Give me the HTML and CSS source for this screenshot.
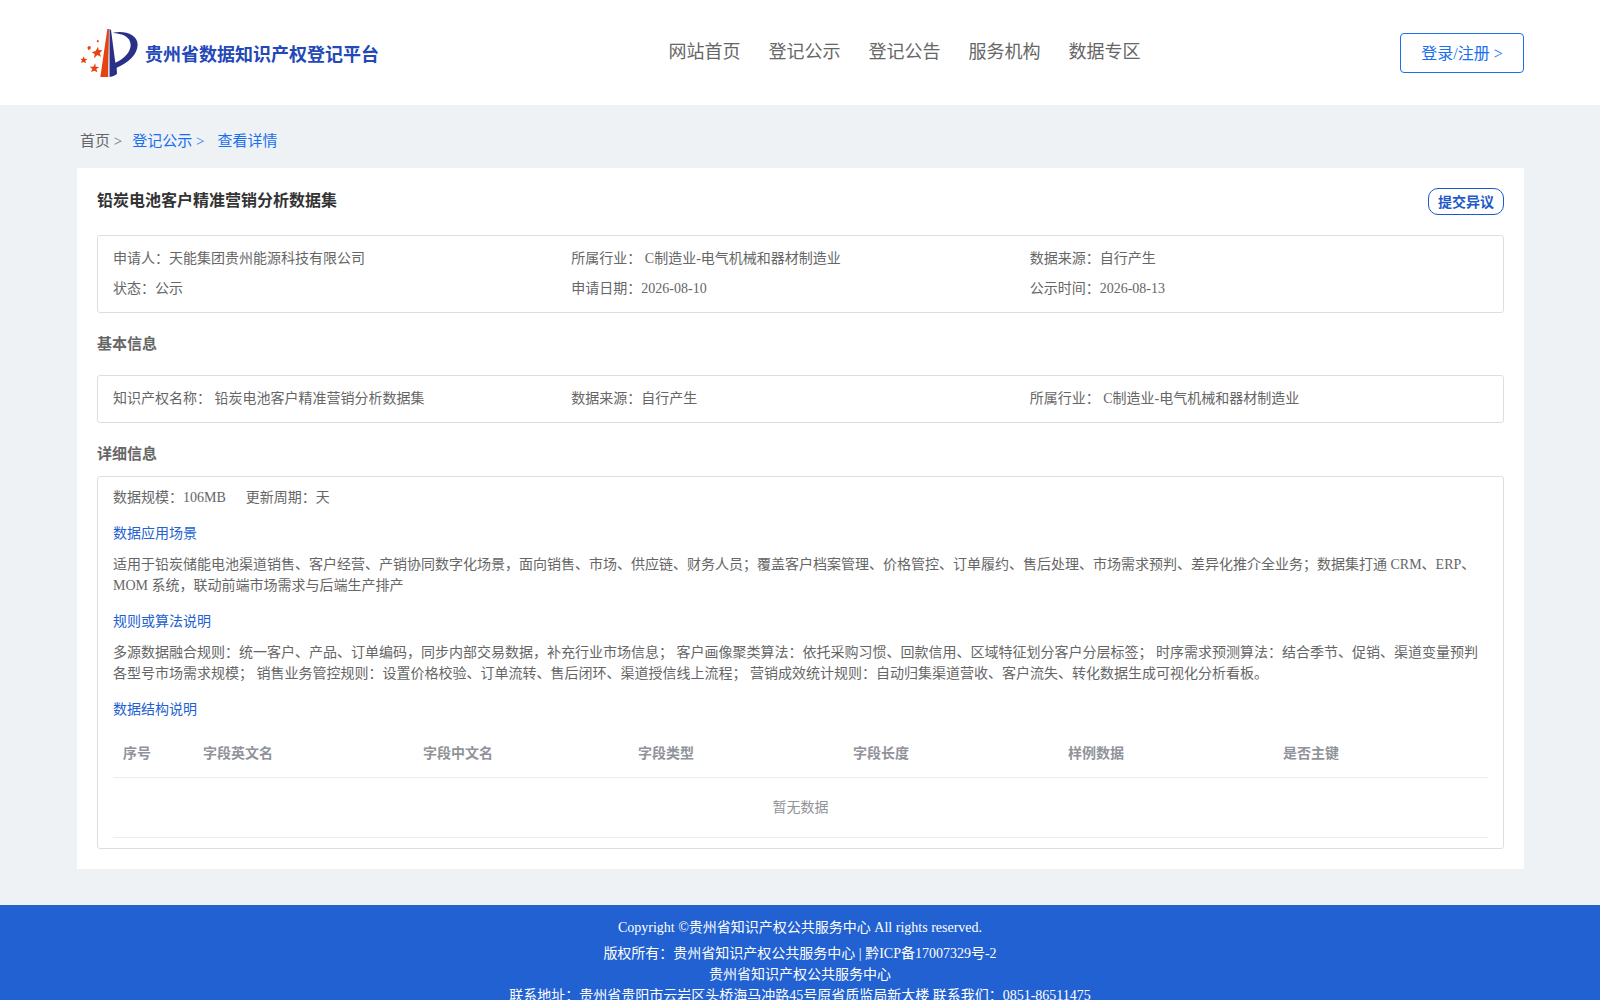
FILE: index.html
```html
<!doctype html>
<html lang="zh-CN">
<head>
    <meta charset="UTF-8">
    <meta name="viewport" content="width=device-width,initial-scale=1.0">
    <title>贵州省数据知识产权登记平台</title>
    <link rel="stylesheet" href="styles.css">
</head>
<body>
    <header class="header">
        <a class="logo" href="#">
            <svg class="logo-img" viewBox="60 54 177 150" aria-hidden="true">
                <path class="logo-red" d="M142 57 H148 L145 201 H121 Z"></path>
                <path class="logo-gray" d="M147 57 H150 V201 H144 Z"></path>
                <path class="logo-blue" d="M149 57 L153 60 L166 158 C196 144 212 124 212 104 C211 80 188 71 157 69 C190 60 233 72 233 104 C232 134 204 159 170 173 L171 192 Q161 200 149 201 Z"></path>
                <path class="logo-red" d="M114 110 L116 120 L127 121 L119 129 L123 140 L112 135 L102 145 L104 132 L95 127 L107 123 Z"></path>
                <path class="logo-red" d="M106 160 L107 170 L118 171 L109 177 L112 187 L103 182 L93 186 L97 177 L89 170 L100 170 Z"></path>
                <path class="logo-red" d="M71 139 L74 146 L82 147 L76 152 L78 160 L70 156 L63 159 L66 151 L61 146 L68 146 Z"></path>
                <path class="logo-red" d="M86 108 L93 110 L91 118 L85 120 L82 113 Z"></path>
                <path class="logo-red" d="M112 89 L117 92 L115 97 L110 96 Z"></path>
            </svg>
            <span class="logo-text">贵州省数据知识产权登记平台</span>
        </a>
        <nav class="nav">
            <a href="#">网站首页</a>
            <a href="#">登记公示</a>
            <a href="#">登记公告</a>
            <a href="#">服务机构</a>
            <a href="#">数据专区</a>
        </nav>
        <button class="login" type="button">登录/注册 &gt;</button>
    </header>

    <main class="main">
        <nav class="crumbs">
            <a href="#">首页 &gt;</a>
            <a class="active" href="#">登记公示 &gt;</a>
            <a class="active last" href="#">查看详情</a>
        </nav>

        <div class="card">
            <div class="card-head">
                <h1>铅炭电池客户精准营销分析数据集</h1>
                <button class="objection" type="button">提交异议</button>
            </div>
            <div class="box info">
                <div>申请人：天能集团贵州能源科技有限公司</div>
                <div>所属行业： C制造业-电气机械和器材制造业</div>
                <div>数据来源：自行产生</div>
                <div>状态：公示</div>
                <div>申请日期：2026-08-10</div>
                <div>公示时间：2026-08-13</div>
            </div>

            <h2>基本信息</h2>
            <div class="box info">
                <div>知识产权名称： 铅炭电池客户精准营销分析数据集</div>
                <div>数据来源：自行产生</div>
                <div>所属行业： C制造业-电气机械和器材制造业</div>
            </div>

            <h2 class="tight">详细信息</h2>
            <div class="box detail">
                <div class="scale">
                    <span>数据规模：106MB</span>
                    <span>更新周期：天</span>
                </div>
                <h3>数据应用场景</h3>
                <p>适用于铅炭储能电池渠道销售、客户经营、产销协同数字化场景，面向销售、市场、供应链、财务人员；覆盖客户档案管理、价格管控、订单履约、售后处理、市场需求预判、差异化推介全业务；数据集打通 CRM、ERP、MOM 系统，联动前端市场需求与后端生产排产</p>
                <h3>规则或算法说明</h3>
                <p>多源数据融合规则：统一客户、产品、订单编码，同步内部交易数据，补充行业市场信息； 客户画像聚类算法：依托采购习惯、回款信用、区域特征划分客户分层标签； 时序需求预测算法：结合季节、促销、渠道变量预判各型号市场需求规模； 销售业务管控规则：设置价格校验、订单流转、售后闭环、渠道授信线上流程； 营销成效统计规则：自动归集渠道营收、客户流失、转化数据生成可视化分析看板。</p>
                <h3>数据结构说明</h3>
                <table class="table">
                    <thead>
                        <tr>
                            <th class="col-index">序号</th>
                            <th class="col-name">字段英文名</th>
                            <th>字段中文名</th>
                            <th>字段类型</th>
                            <th>字段长度</th>
                            <th>样例数据</th>
                            <th>是否主键</th>
                        </tr>
                    </thead>
                    <tbody>
                        <tr>
                            <td class="empty" colspan="7">暂无数据</td>
                        </tr>
                    </tbody>
                </table>
            </div>
        </div>
    </main>

    <footer class="footer">
        <p class="copyright">Copyright ©贵州省知识产权公共服务中心 All rights reserved.</p>
        <p>版权所有：贵州省知识产权公共服务中心 | 黔ICP备17007329号-2</p>
        <p>贵州省知识产权公共服务中心</p>
        <p>联系地址：贵州省贵阳市云岩区头桥海马冲路45号原省质监局新大楼 联系我们：0851-86511475</p>
    </footer>
</body>
</html>
```
FILE: styles.css
```css
* {
    box-sizing: border-box;
}

body {
    margin: 0;
    background: #eef2f5;
    color: #666;
    font-family: "Liberation Serif", "Noto Sans CJK SC", serif;
    font-size: 14px;
    line-height: 21px;
}

h1, h2, h3, p {
    margin: 0;
}

a {
    color: inherit;
    text-decoration: none;
}

button {
    background: #fff;
    font-family: inherit;
    cursor: pointer;
}

.header {
    display: flex;
    align-items: center;
    justify-content: space-between;
    height: 105px;
    padding: 0 76px 0 80px;
    background: #fff;
}

.logo {
    display: flex;
    align-items: center;
    gap: 6px;
}

.logo-img {
    width: 59px;
    height: 50px;
}

.logo-red {
    fill: #e64312;
}

.logo-gray {
    fill: #d9d9e3;
}

.logo-blue {
    fill: #29308a;
}

.logo-text {
    padding-top: 6px;
    color: #2348b8;
    font-size: 18px;
    font-weight: bold;
    white-space: nowrap;
}

.nav {
    display: flex;
    gap: 28px;
    padding-left: 30px;
    font-size: 18px;
    white-space: nowrap;
}

.login {
    min-width: 124px;
    height: 40px;
    padding: 0 20px 2px;
    border: 1px solid #1a6fef;
    border-radius: 4px;
    color: #1a6fef;
    font-size: 16px;
}

.main {
    padding: 0 76px 36px 77px;
}

.crumbs {
    display: flex;
    gap: 10px;
    padding: 26px 3px 17px;
    font-size: 15px;
    line-height: 20px;
}

.crumbs .active {
    color: #1a6fef;
}

.crumbs .last {
    padding-left: 3px;
}

.card {
    padding: 20px;
    background: #fff;
}

.card-head {
    display: flex;
    align-items: flex-start;
    justify-content: space-between;
    margin-bottom: 20px;
}

.card h1 {
    color: #333;
    font-size: 16px;
    line-height: 26px;
}

.objection {
    height: 27px;
    padding: 0 9px 2px;
    border: 1px solid #1d59c8;
    border-radius: 10px;
    color: #1d59c8;
    font-size: 14px;
    font-weight: bold;
}

.card h2 {
    margin: 20px 0;
    font-size: 15px;
    line-height: 22px;
}

.card h2.tight {
    margin-bottom: 11px;
}

.box {
    padding: 8px 15px;
    border: 1px solid #dcdfe0;
    border-radius: 3px;
}

.info {
    display: grid;
    grid-template-columns: repeat(3, 1fr);
    line-height: 30px;
}

.detail {
    padding: 10px 15px;
}

.scale {
    display: flex;
    gap: 20px;
}

.detail h3 {
    margin: 15px 0 10px;
    color: #2161d1;
    font-size: 14px;
    font-weight: normal;
}

.table {
    width: 100%;
    border-collapse: separate;
    border-spacing: 0;
    table-layout: fixed;
    color: #909399;
}

.table th,
.table td {
    padding: 12px 10px;
    border-bottom: 1px solid #ebeef0;
    line-height: 23px;
    text-align: left;
}

.table .col-index {
    width: 80px;
}

.table .col-name {
    width: 220px;
}

.table .empty {
    height: 60px;
    text-align: center;
}

.footer {
    padding: 12px 0 20px;
    background: #2161d1;
    color: #fff;
    text-align: center;
}

.copyright {
    margin-bottom: 5px;
}
```
